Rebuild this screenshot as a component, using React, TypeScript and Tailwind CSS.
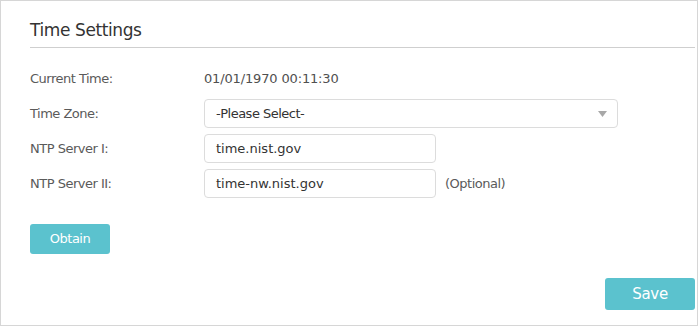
import React from "react";

export default function App() {
  const font = { fontFamily: '"DejaVu Sans", Verdana, sans-serif' };
  return (
    <div className="w-[699px] h-[327px] bg-white" style={font}>
      <div className="w-[698px] h-[326px] border border-[#d6d6d6] pl-[29px] pr-[2px] pt-[19px] flex flex-col">
        <div className="text-[17px] leading-[20px] text-[#333] tracking-[-0.4px]">Time Settings</div>
        <div className="mt-[7px] h-px bg-[#cfcfcf]" />
        <div className="mt-[16px] flex flex-col gap-[6px]">
          <div className="flex items-center h-[29px]">
            <div className="w-[174px] text-[13px] leading-[16px] text-[#5a5a5a] tracking-[-0.5px]">Current Time:</div>
            <div className="text-[13px] leading-[16px] text-[#505050] tracking-[-0.15px]">01/01/1970 00:11:30</div>
          </div>
          <div className="flex items-center h-[29px]">
            <div className="w-[174px] text-[13px] leading-[16px] text-[#5a5a5a] tracking-[-0.5px]">Time Zone:</div>
            <div className="relative w-[414px] h-[29px] border border-[#dcdcdc] rounded-[4px] flex items-center pl-[11px] text-[13px] leading-[16px] text-[#333] tracking-[-0.5px]">
              -Please Select-
              <svg className="absolute right-[10px] top-[11px]" width="9" height="6" viewBox="0 0 9 6">
                <path d="M0 0 L9 0 L4.5 6 Z" fill="#a8a8a8" />
              </svg>
            </div>
          </div>
          <div className="flex items-center h-[29px]">
            <div className="w-[174px] text-[13px] leading-[16px] text-[#5a5a5a] tracking-[-0.5px]">NTP Server I:</div>
            <div className="w-[232px] h-[29px] border border-[#dcdcdc] rounded-[4px] flex items-center pl-[11px] text-[13px] leading-[16px] text-[#333]">
              time.nist.gov
            </div>
          </div>
          <div className="flex items-center h-[29px]">
            <div className="w-[174px] text-[13px] leading-[16px] text-[#5a5a5a] tracking-[-0.5px]">NTP Server II:</div>
            <div className="w-[232px] h-[29px] border border-[#dcdcdc] rounded-[4px] flex items-center pl-[11px] text-[13px] leading-[16px] text-[#333]">
              time-nw.nist.gov
            </div>
            <div className="ml-[9px] text-[13px] leading-[16px] text-[#5a5a5a] tracking-[-0.5px]">(Optional)</div>
          </div>
        </div>
        <div className="mt-[26px]">
          <button className="w-[80px] h-[30px] rounded-[3px] bg-[#5bc2ce] text-white text-[13px] leading-[16px] tracking-[-0.5px]">
            Obtain
          </button>
        </div>
        <div className="mt-[24px] flex justify-end">
          <button className="w-[90px] h-[32px] rounded-[3px] bg-[#5bc2ce] text-white text-[15px] leading-[18px] tracking-[-0.3px]">
            Save
          </button>
        </div>
      </div>
    </div>
  );
}
